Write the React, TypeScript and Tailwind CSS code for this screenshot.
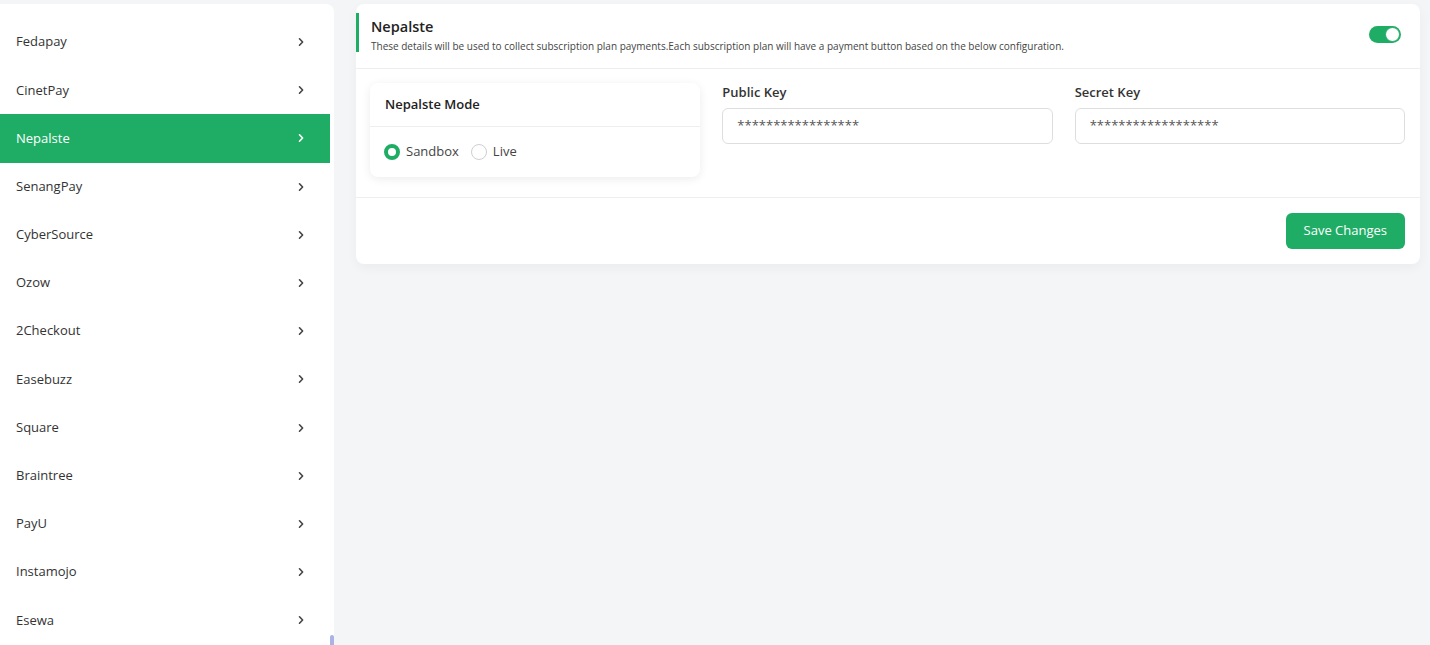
const gateways = [
  'Fedapay',
  'CinetPay',
  'Nepalste',
  'SenangPay',
  'CyberSource',
  'Ozow',
  '2Checkout',
  'Easebuzz',
  'Square',
  'Braintree',
  'PayU',
  'Instamojo',
  'Esewa',
]

function Chevron() {
  return (
    <svg width="8" height="10" viewBox="0 0 8 10" fill="none">
      <path d="M2.5 1.8 5.6 5 2.5 8.2" stroke="currentColor" strokeWidth="1.6" strokeLinecap="round" strokeLinejoin="round" />
    </svg>
  )
}

function Sidebar() {
  return (
    <aside className="mt-1 flex w-[334px] shrink-0 rounded-tr-lg bg-white">
      <ul className="w-[330px] pt-[14px]">
        {gateways.map((name) => {
          const active = name === 'Nepalste'
          return (
            <li
              key={name}
              className={
                active
                  ? 'flex h-[48.2px] items-center justify-between bg-[#1fad66] pl-[16px] pr-[25px] text-white'
                  : 'flex h-[48.2px] items-center justify-between pl-[16px] pr-[25px] text-[#333]'
              }
            >
              <span className="text-[13px]">{name}</span>
              <span className={active ? 'text-white' : 'text-[#444]'}>
                <Chevron />
              </span>
            </li>
          )
        })}
      </ul>
      <div className="flex w-[4px] flex-col justify-end">
        <div className="mb-[-40px] h-[50px] rounded-sm bg-[#aab3e3]" />
      </div>
    </aside>
  )
}

function Toggle() {
  return (
    <div className="flex h-[17px] w-[32px] items-center justify-end rounded-full bg-[#1fad66] p-[1px]">
      <div className="h-[15px] w-[15px] rounded-full border border-[#1fad66] bg-white" />
    </div>
  )
}

function KeyField({ label, value }: { label: string; value: string }) {
  return (
    <div>
      <label className="block pt-[1px] text-[13px] font-semibold leading-4 text-[#333]">{label}</label>
      <div className="mt-[8px] flex h-[36px] items-center rounded-md border border-[#dedede] px-[14px] text-[13px] text-[#555]">
        {value}
      </div>
    </div>
  )
}

export default function App() {
  return (
    <div
      className="flex h-[645px] w-full overflow-hidden bg-[#f4f5f6]"
      style={{ fontFamily: '"Open Sans", "Noto Sans", sans-serif' }}
    >
      <Sidebar />
      <main className="flex-1 pl-[22px] pr-[10px] pt-1">
        <section className="rounded-lg bg-white shadow-[0_4px_12px_rgba(0,0,0,0.04)]">
          <header className="flex items-center justify-between border-b border-[#eeeeee] pb-[16px] pr-[19px] pt-[9px]">
            <div className="border-l-[3px] border-[#1fad66] pl-[12px] pt-[4px]">
              <h2 className="text-[14.5px] font-semibold leading-5 text-[#222]">Nepalste</h2>
              <p className="mt-[3px] text-[10px] leading-3 text-[#444]">
                These details will be used to collect subscription plan payments.Each subscription plan will have a payment button based on the below configuration.
              </p>
            </div>
            <div className="pt-[4px]">
              <Toggle />
            </div>
          </header>
          <div className="grid grid-cols-3 gap-[22px] border-b border-[#eeeeee] pb-[20px] pl-[14px] pr-[15px] pt-[14px]">
            <div className="rounded-lg bg-white shadow-[0_2px_10px_rgba(0,0,0,0.08)]">
              <div className="flex h-[44px] items-center border-b border-[#eeeeee] px-[15px] text-[13px] font-semibold text-[#222]">
                Nepalste Mode
              </div>
              <div className="flex h-[50px] items-center gap-[12px] px-[14px] text-[13px] text-[#444]">
                <label className="flex items-center gap-[6px]">
                  <span className="h-4 w-4 rounded-full border-[4px] border-[#1fad66] bg-white" />
                  Sandbox
                </label>
                <label className="flex items-center gap-[6px]">
                  <span className="h-4 w-4 rounded-full border border-[#cfcfcf] bg-white" />
                  Live
                </label>
              </div>
            </div>
            <KeyField label="Public Key" value="*****************" />
            <KeyField label="Secret Key" value="******************" />
          </div>
          <footer className="flex justify-end px-[15px] py-[15px]">
            <button className="h-[36px] rounded-md bg-[#1fad66] px-[18px] text-[13px] text-white">Save Changes</button>
          </footer>
        </section>
      </main>
    </div>
  )
}
